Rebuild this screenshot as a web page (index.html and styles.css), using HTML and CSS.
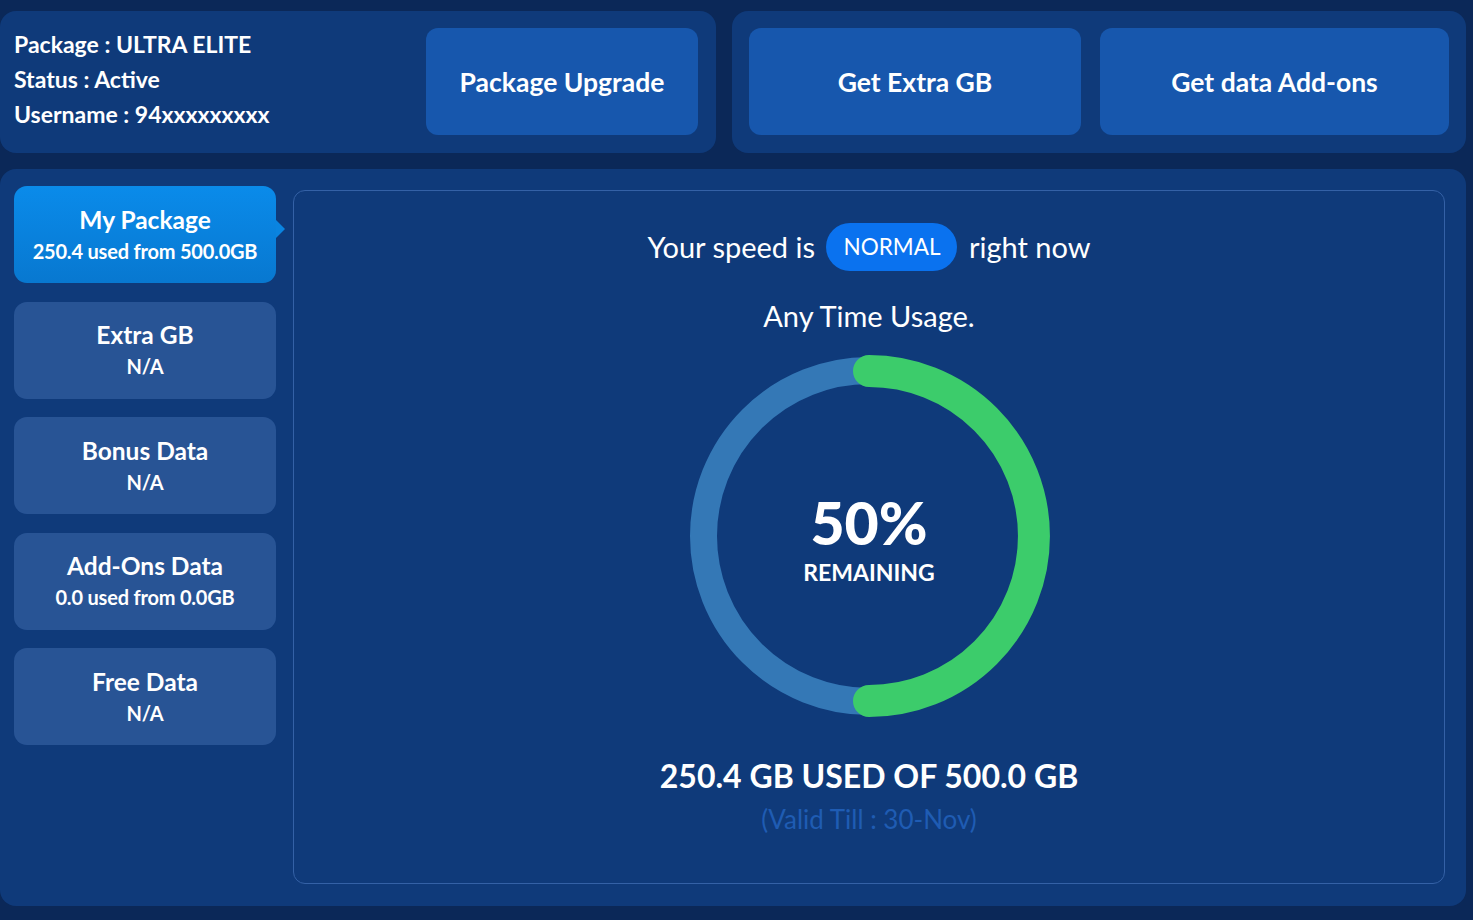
FILE: index.html
```html
<!DOCTYPE html>
<html lang="en">
<head>
  <meta charset="UTF-8" />
  <meta name="viewport" content="width=device-width, initial-scale=1.0"/>
  <title>My Usage</title>
  <link rel="stylesheet" href="styles.css">
</head>
<body>

  <div class="top-row">
    <div class="panel info-panel">
      <div class="info">
        <div>Package : ULTRA ELITE</div>
        <div>Status : Active</div>
        <div>Username : 94xxxxxxxxx</div>
      </div>
      <button class="big-btn upgrade-btn">Package Upgrade</button>
    </div>
    <div class="panel actions-panel">
      <button class="big-btn">Get Extra GB</button>
      <button class="big-btn">Get data Add-ons</button>
    </div>
  </div>

  <div class="panel main-panel">
    <div class="sidebar">
      <div class="side-card active">
        <div class="side-title">My Package</div>
        <div class="side-sub">250.4 used from 500.0GB</div>
      </div>
      <div class="side-card">
        <div class="side-title">Extra GB</div>
        <div class="side-sub">N/A</div>
      </div>
      <div class="side-card">
        <div class="side-title">Bonus Data</div>
        <div class="side-sub">N/A</div>
      </div>
      <div class="side-card">
        <div class="side-title">Add-Ons Data</div>
        <div class="side-sub">0.0 used from 0.0GB</div>
      </div>
      <div class="side-card">
        <div class="side-title">Free Data</div>
        <div class="side-sub">N/A</div>
      </div>
    </div>

    <div class="usage-card">
      <div class="speed">Your speed is <span class="badge">NORMAL</span> right now</div>
      <div class="usage-label">Any Time Usage.</div>

      <div class="ring">
        <svg width="370" height="370" viewBox="0 0 370 370">
          <circle cx="185" cy="185" r="165.5" fill="none" stroke="#3478b6" stroke-width="27"/>
          <path d="M185 20 A165 165 0 0 1 185 350" fill="none" stroke="#3ccc6b" stroke-width="32" stroke-linecap="round"/>
        </svg>
        <div class="ring-text">
          <div class="pct">50%</div>
          <div class="remain">REMAINING</div>
        </div>
      </div>

      <div class="used">250.4 GB USED OF 500.0 GB</div>
      <div class="valid">(Valid Till : 30-Nov)</div>
    </div>
  </div>

</body>
</html>
```

FILE: styles.css
```css
body {
  margin: 0;
  background: #0b2858;
  font-family: Lato, "Open Sans", sans-serif;
  color: #fff;
  height: 920px;
  overflow: hidden;
}
.top-row {
  display: flex;
  gap: 16px;
  padding: 11px 7px 0 0;
}
.panel {
  background: #0f3a7a;
  border-radius: 16px;
}
.info-panel {
  width: 716px;
  height: 142px;
  display: flex;
  box-sizing: border-box;
  padding: 0 18px 0 14px;
}
.info {
  font-size: 23px;
  font-weight: bold;
  line-height: 35px;
  padding-top: 16px;
}
.big-btn {
  font-family: inherit;
  font-size: 26.5px;
  font-weight: bold;
  color: #fff;
  background: #1757ad;
  border: none;
  border-radius: 12px;
  height: 107px;
  margin-top: 17px;
  padding: 0;
  cursor: pointer;
}
.upgrade-btn {
  margin-left: auto;
  width: 272px;
}
.actions-panel {
  flex: 1;
  height: 142px;
  display: grid;
  grid-template-columns: 332px 1fr;
  gap: 19px;
  padding: 0 17px;
}
.main-panel {
  display: flex;
  margin: 16px 7px 0 0;
  height: 737px;
  box-sizing: border-box;
  padding: 17px 21px 22px 14px;
}
.sidebar {
  width: 262px;
  display: flex;
  flex-direction: column;
  gap: 18.5px;
}
.side-card {
  position: relative;
  height: 97px;
  background: #285495;
  border-radius: 13px;
  text-align: center;
  display: flex;
  flex-direction: column;
  justify-content: center;
}
.side-card.active {
  background: linear-gradient(#0a8bea, #0878d0);
}
.side-card.active::after {
  content: "";
  position: absolute;
  right: -9px;
  top: 34px;
  border-top: 9px solid transparent;
  border-bottom: 9px solid transparent;
  border-left: 9px solid #0a84e0;
}
.side-title {
  font-size: 24.5px;
  font-weight: bold;
  line-height: 32px;
}
.side-sub {
  font-size: 20px;
  font-weight: bold;
  line-height: 30px;
  letter-spacing: -0.2px;
}
.usage-card {
  flex: 1;
  margin: 4px 0 0 17px;
  border: 1px solid #3461a6;
  border-radius: 12px;
  text-align: center;
  padding-top: 32px;
}
.speed {
  font-size: 29px;
  line-height: 48px;
}
.badge {
  display: inline-block;
  background: #0a72ef;
  border-radius: 24px;
  padding: 0 17px;
  font-size: 22.5px;
  margin: 0 4px;
  vertical-align: top;
}
.usage-label {
  font-size: 29px;
  line-height: 36px;
  margin-top: 27px;
}
.ring {
  position: relative;
  width: 370px;
  height: 370px;
  margin: 17px auto 0;
}
.ring svg {
  display: block;
}
.ring-text {
  position: absolute;
  inset: 0;
  display: flex;
  flex-direction: column;
  justify-content: center;
  padding-top: 1px;
}
.pct {
  font-size: 59px;
  font-weight: 900;
  line-height: 71px;
}
.remain {
  font-size: 23px;
  font-weight: bold;
  line-height: 28px;
}
.used {
  font-size: 32px;
  font-weight: bold;
  line-height: 40px;
  margin-top: 35px;
}
.valid {
  font-size: 26px;
  color: #1f5cb3;
  line-height: 34px;
  margin-top: 6px;
}
```
